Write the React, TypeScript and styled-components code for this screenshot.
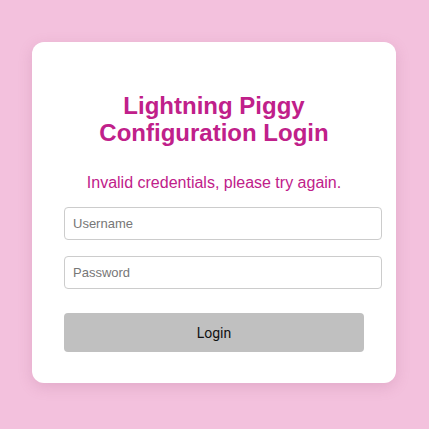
import React from 'react'
import styled, { createGlobalStyle } from 'styled-components'

const GlobalStyle = createGlobalStyle`
  html, body {
    margin: 0;
    padding: 0;
    background: #f3c1dd;
    font-family: "Liberation Sans", Arial, sans-serif;
  }
`

const Page = styled.div`
  width: 429px;
  height: 429px;
  display: flex;
  padding: 42px 0 0 32px;
  box-sizing: border-box;
`

const Card = styled.div`
  width: 364px;
  height: 341px;
  box-sizing: border-box;
  background: #ffffff;
  border-radius: 12px;
  padding: 32px;
  box-shadow: 0 4px 14px rgba(170, 90, 130, 0.22);
`

const Title = styled.h2`
  margin: 18px 0 0;
  color: #c0208a;
  font-size: 24px;
  line-height: 27px;
  font-weight: bold;
  text-align: center;
`

const ErrorText = styled.p`
  margin: 28px 0 0;
  color: #c0208a;
  font-size: 16px;
  line-height: 18px;
  text-align: center;
`

const Field = styled.input<{ $top: number }>`
  display: block;
  width: 100%;
  line-height: 15px;
  margin: ${(p) => p.$top}px 0 0;
  padding: 8px;
  border: 1px solid #cccccc;
  border-radius: 4px;
  font-family: "Liberation Sans", Arial, sans-serif;
  font-size: 13px;
  color: #333;
  background: #fff;
  &::placeholder {
    color: #777;
  }
`

const Button = styled.button`
  display: block;
  width: 100%;
  height: 39px;
  margin-top: 24px;
  border: none;
  border-radius: 4px;
  background: #c0c0c0;
  color: #111;
  font-family: Roboto, "Noto Sans", sans-serif;
  font-size: 14px;
`

export default function App() {
  return (
    <>
      <GlobalStyle />
      <Page>
        <Card>
          <Title>
            Lightning Piggy
            <br />
            Configuration Login
          </Title>
          <ErrorText>Invalid credentials, please try again.</ErrorText>
          <Field $top={15} type="text" placeholder="Username" />
          <Field $top={16} type="password" placeholder="Password" />
          <Button type="button">Login</Button>
        </Card>
      </Page>
    </>
  )
}
